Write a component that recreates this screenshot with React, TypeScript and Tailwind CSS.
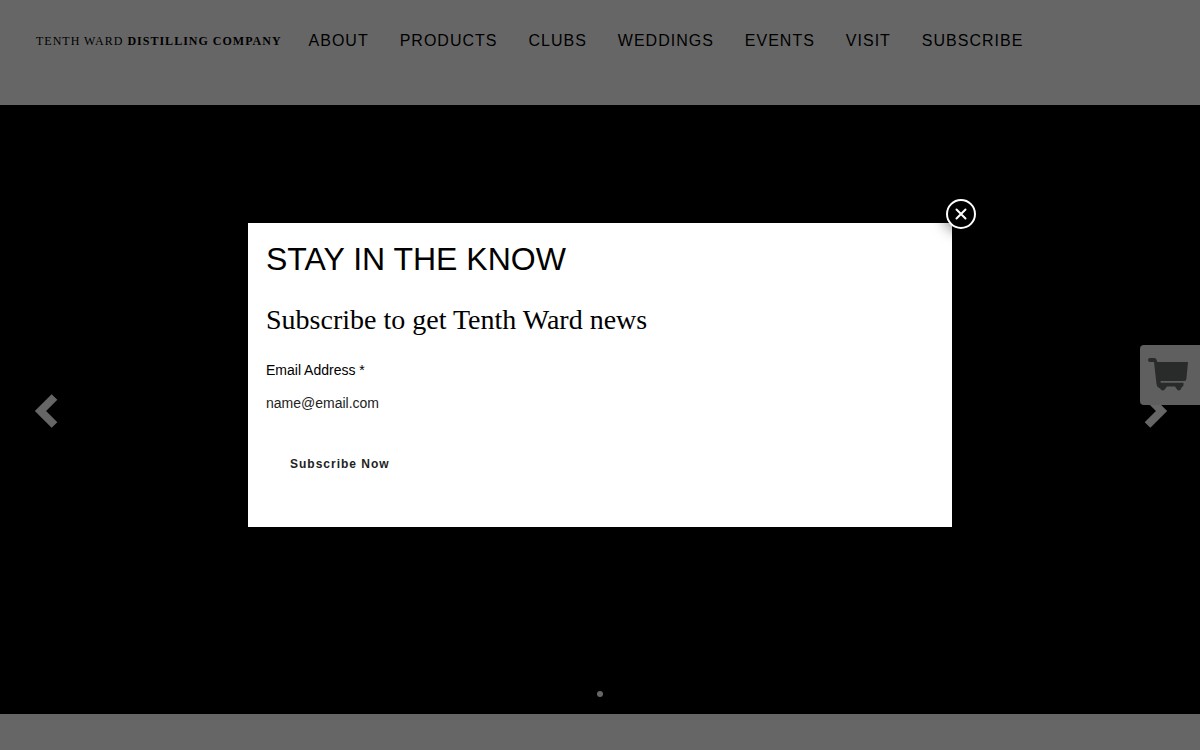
import { useState } from 'react';

const LINKS = ['About', 'Products', 'Clubs', 'Weddings', 'Events', 'Visit', 'Subscribe'];

function Header() {
  return (
    <header className="flex h-[105px] items-start px-9 pt-[29px]">
      <a
        href="#home"
        className="mr-[27px] font-['Liberation_Serif',serif] text-xs leading-6 tracking-[1px] whitespace-nowrap uppercase"
      >
        Tenth Ward <b>Distilling Company</b>
      </a>

      <nav className="flex gap-[31px]">
        {LINKS.map((link) => (
          <a key={link} href={`#${link.toLowerCase()}`} className="text-base tracking-[1px] uppercase">
            {link}
          </a>
        ))}
      </nav>
    </header>
  );
}

function Slider() {
  return (
    <section className="relative flex h-[609px] items-center justify-between bg-black pt-0.5 pr-[31px] pl-[33px] text-white">
      <button type="button" aria-label="Previous slide">
        <svg width="26" height="36" viewBox="0 0 26 36" fill="none" stroke="currentColor" strokeWidth="8">
          <path d="M21.5 4 7.5 18l14 14" />
        </svg>
      </button>
      <button type="button" aria-label="Next slide">
        <svg width="26" height="36" viewBox="0 0 26 36" fill="none" stroke="currentColor" strokeWidth="8">
          <path d="M4.5 4l14 14-14 14" />
        </svg>
      </button>
      <button
        type="button"
        aria-label="Slide 1"
        className="absolute bottom-[17px] left-1/2 size-1.5 -translate-x-1/2 rounded-full bg-white"
      />
    </section>
  );
}

function CartButton() {
  return (
    <button
      type="button"
      aria-label="Cart"
      className="fixed top-1/2 right-0 size-[60px] -translate-y-1/2 rounded-l bg-[#eeeeee] text-[#666b6b]"
    >
      <svg width="60" height="60" viewBox="0 0 60 60" fill="currentColor">
        <path d="M8 15a2 2 0 0 1 2-2h4.5q1.500 0 2 1.500l.8 2.500H48l-1.600 17q-.2 2-2 2H20.500l.3 1.800H43.500v3l-1.700 1.500-1.300 2.500q-1.500 1.200-3.300 0l-2.200-3.200h-8l-2.500 3.200q-1.800 1.200-3.500 0l-.8-1.300-2.700-1.500-1-3L14 17H10a2 2 0 0 1-2-2Z" />
      </svg>
    </button>
  );
}

function SubscribeDialog({ onClose }: { onClose: () => void }) {
  return (
    <div className="fixed inset-0 flex items-center justify-center bg-black/60 p-6">
      <div role="dialog" aria-labelledby="dialog-title" className="relative w-full max-w-[704px] bg-white px-[18px] pt-[18px] pb-[43px]">
        <h1 id="dialog-title" className="text-[32px] leading-9">
          STAY IN THE KNOW
        </h1>
        <h2 className="mt-[25px] font-['Liberation_Serif',serif] text-[28px] leading-9">Subscribe to get Tenth Ward news</h2>

        <form className="mt-[22px] text-sm" onSubmit={(e) => e.preventDefault()}>
          <label htmlFor="email" className="block">
            Email Address *
          </label>
          <input
            id="email"
            type="email"
            placeholder="name@email.com"
            className="mt-[13px] block h-5 w-full outline-none placeholder:text-[#222222]"
          />
          <button type="submit" className="mt-[31px] block h-10 px-6 text-xs font-bold tracking-[1px] text-[#222222]">
            Subscribe Now
          </button>
        </form>

        <button
          type="button"
          aria-label="Close"
          onClick={onClose}
          className="absolute -top-6 -right-6 flex size-[30px] items-center justify-center rounded-full border-2 border-white bg-black text-white shadow-[0_0_15px_1px_rgba(0,0,0,0.6)]"
        >
          <svg width="12" height="12" viewBox="0 0 12 12" stroke="currentColor" strokeWidth="2" strokeLinecap="round">
            <path d="M1.500 1.500l9 9M10.500 1.500l-9 9" />
          </svg>
        </button>
      </div>
    </div>
  );
}

export default function App() {
  const [open, setOpen] = useState(true);

  return (
    <div className="min-h-screen bg-white font-['Liberation_Sans',sans-serif] text-black">
      <Header />
      <Slider />
      <CartButton />
      {open && <SubscribeDialog onClose={() => setOpen(false)} />}
    </div>
  );
}
